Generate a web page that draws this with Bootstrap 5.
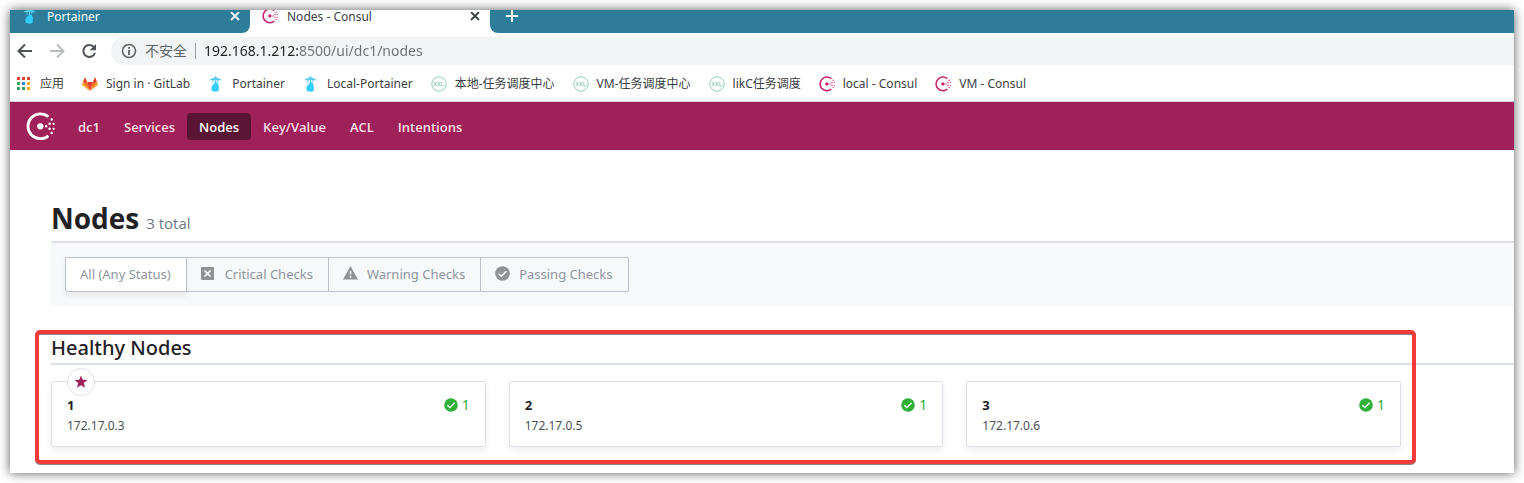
<!DOCTYPE html>
<html lang="zh-CN">
<head>
<meta charset="utf-8">
<meta name="viewport" content="width=device-width, initial-scale=1">
<title>Nodes - Consul</title>
<link href="https://cdn.jsdelivr.net/npm/bootstrap@5.3.0/dist/css/bootstrap.min.css" rel="stylesheet">
<style>
  :root { --teal: #2d7d9a; --magenta: #9e2159; --line: #dce0e6; }
  body { font-family: "Noto Sans", "Noto Sans CJK SC", sans-serif; font-size: 14px; background: #fff; padding: 10px; }
  svg { display: block; flex: none; }
  .window { background: #fff; box-shadow: 0 0 10px rgba(0,0,0,.65); padding-bottom: 26px; }

  .tabstrip { background: #fff; height: 23px; font-size: 12px; line-height: 14px; }
  .tab { width: 240px; padding: 0 10px 0 12px; gap: 9px; color: #3c4043; }
  .tab-inactive { background: var(--teal); color: #fff; border-bottom-right-radius: 8px; }
  .tab-rest { background: var(--teal); border-bottom-left-radius: 8px; padding-left: 16px; }
  .plain-btn { border: 0; background: none; padding: 0; color: inherit; }
  .clip-top { height: 14px; overflow: hidden; display: flex; align-items: flex-end; }

  .toolbar { height: 36px; padding-left: 7px; color: #5f6368; }
  .address { background: #f1f3f4; height: 28px; border-radius: 14px 0 0 14px; margin-left: 14px; padding-left: 10px; gap: 8px; font-size: 14px; }
  .address input { border: 0; outline: 0; background: linear-gradient(90deg, #202124 95px, #6b7075 95px) text; color: #5f6368; -webkit-text-fill-color: transparent; padding: 0; line-height: 24px; }
  .insecure { border-right: 1px solid #9aa0a6; padding-right: 8px; line-height: 16px; }

  .bookmarks { height: 33px; padding: 0 6px 2px; border-bottom: 1px solid #d5d5d8; font-size: 12px; gap: 18px; }
  .bookmarks a { color: #3c4043; gap: 8px; line-height: 16px; }

  .consul-nav { font-family: "Open Sans", sans-serif; background: var(--magenta); height: 48px; padding: 0 16px; font-size: 13px; }
  .consul-nav .logo { margin-right: 11px; }
  .consul-nav .nav-link { color: #f8dfea; font-weight: 600; padding: 5px 12px 3px; line-height: 19px; border-radius: 4px; }
  .consul-nav .nav-link.active { background: #5a1434; color: #fff; }

  main { padding: 50px 0 0 41px; color: #1f2124; }
  h1 { font-family: "Open Sans", sans-serif; font-size: 28px; font-weight: 700; line-height: 37px; border-bottom: 2px solid var(--line); padding-bottom: 4px; }
  h1 span { font-size: 15px; font-weight: 400; line-height: 20px; color: #6f7682; margin-left: 7px; }
  .filters { background: #f7f8fa; padding: 14px; }
  .filters .btn { --bs-btn-color: #8e959f; --bs-btn-border-color: #bac1cc; --bs-btn-active-bg: #fff; --bs-btn-active-color: #8e959f; --bs-btn-active-border-color: #bac1cc;
    --bs-btn-border-radius: 2px; font-size: 13px; line-height: 21px; padding: 6px 15px 6px 14px; height: 35px; display: flex; align-items: center; gap: 9px; }
  .filters .btn-check:checked + .btn { box-shadow: 0 4px 6px rgba(0,0,0,.06); }
  .filters svg { color: #909294; margin-bottom: 3px; }

  .healthy { margin-top: 28px; }
  h2 { font-size: 20px; font-weight: 500; line-height: 27px; border-bottom: 2px solid var(--line); padding-bottom: 2px; }
  .node-grid { display: grid; grid-template-columns: repeat(3, 1fr); gap: 23px; margin: 16px 113px 0 0; }
  .node-card { border: 1px solid var(--line); border-radius: 2px; height: 66px; padding: 13px 15px 0; color: #1f2124; box-shadow: 0 4px 8px rgba(0,0,0,.06); }
  .node-card strong { font-size: 13px; line-height: 20px; }
  .node-card small { font-size: 12px; line-height: 22px; color: #4b4f56; }
  .passing { color: #2eb039; font-size: 14px; line-height: 20px; gap: 4px; }
  .leader { top: -14px; left: 15px; width: 28px; height: 28px; border: 1px solid var(--line); border-radius: 50%; background: #fff; color: var(--magenta); }
  .highlight { inset: -4px 98px -17px -16px; border: 4px solid #f23a3a; border-radius: 5px; filter: drop-shadow(0 1px 0 #85888c); pointer-events: none; }
</style>
</head>
<body>
<svg width="0" height="0" class="position-absolute" aria-hidden="true">
  <symbol id="consul" viewBox="0 0 28 28">
    <path d="M21.6 4.6A12 12 0 1 0 21.6 23" fill="none" stroke="currentColor" stroke-width="2.7"/>
    <g fill="currentColor"><circle cx="13.8" cy="13.8" r="3"/><circle cx="19.4" cy="13.8" r="1.2"/><circle cx="22.8" cy="11.4" r="1.2"/><circle cx="22.8" cy="16.2" r="1.2"/><circle cx="24.8" cy="7.3" r="1.2"/><circle cx="24.8" cy="20.3" r="1.2"/><circle cx="26.7" cy="11.4" r="1.1"/><circle cx="26.7" cy="16.2" r="1.1"/></g>
  </symbol>
  <symbol id="portainer" viewBox="0 0 16 16">
    <path d="M2 3.300L7 1.300V0h1.200v1.200L13 3.300v.9H10.300v1.600h-1V4.200H8.200V7H7V4.200H5.500V7h-.9V4.200H2z" fill="#5ccbf2"/>
    <path d="M4.300 8.500h2V6.500h3.600v2.300h.9v5.200c0 1-1.400 1.700-3.200 1.700S3.500 15 3.500 14v-3.500h.8z" fill="#33cdfb"/>
  </symbol>
  <symbol id="xxl" viewBox="0 0 16 16">
    <circle cx="8" cy="8" r="7.200" fill="#fff" stroke="#8fd0b3"/>
    <path d="M2.800 5.800l3 4.200M5.800 5.800l-3 4.200M6.500 5.800l3 4.200M9.500 5.800l-3 4.200M10.800 5.800V10h2.700" stroke="#8fd0b3" stroke-width=".9" fill="none"/>
  </symbol>
  <symbol id="close" viewBox="0 0 10 10"><path d="M1 1l8 8M9 1L1 9" stroke="currentColor" stroke-width="1.800"/></symbol>
  <symbol id="check" viewBox="0 0 16 16"><circle cx="8" cy="8" r="7.800" fill="currentColor"/><path d="M3.900 8.300l2.800 2.700 5.400-5.500" fill="none" stroke="#fff" stroke-width="1.600"/></symbol>
</svg>

<div class="window">
  <header>
    <div class="tabstrip d-flex">
      <div class="tab tab-inactive d-flex">
        <svg width="16" height="15"><use href="#portainer" width="16" height="16" y="-2"/></svg>
        <span class="flex-grow-1 text-nowrap">Portainer</span>
        <button class="plain-btn clip-top" aria-label="关闭 Portainer"><svg width="10" height="12"><use href="#close" width="10" height="10" y="-1"/></svg></button>
      </div>
      <div class="tab d-flex">
        <svg width="16" height="15" style="color:#ca2171"><use href="#consul" width="16" height="16" y="-2"/></svg>
        <span class="flex-grow-1 text-nowrap">Nodes - Consul</span>
        <button class="plain-btn clip-top" aria-label="关闭 Consul"><svg width="10" height="12"><use href="#close" width="10" height="10" y="-1"/></svg></button>
      </div>
      <div class="tab-rest flex-grow-1 d-flex text-white">
        <button class="plain-btn clip-top" aria-label="新标签页"><svg width="12" height="14" viewBox="0 0 12 14"><path d="M0 6h12M6 0v12" stroke="currentColor" stroke-width="2"/></svg></button>
      </div>
    </div>

    <div class="toolbar d-flex align-items-center">
      <div class="d-flex gap-3">
        <button class="plain-btn" aria-label="后退"><svg width="16" height="16" viewBox="0 0 16 16" fill="none" stroke="#4f5357" stroke-width="2"><path d="M15 8H2M8 1.500L1.500 8 8 14.500"/></svg></button>
        <button class="plain-btn" aria-label="前进"><svg width="16" height="16" viewBox="0 0 16 16" fill="none" stroke="#b9bcbf" stroke-width="2"><path d="M1 8h13M8 1.500L14.500 8 8 14.500"/></svg></button>
        <button class="plain-btn" aria-label="刷新"><svg width="16" height="16" viewBox="0 0 16 16"><path d="M13 4.200A6 6 0 1 0 14 9.800" fill="none" stroke="#4f5357" stroke-width="2"/><path d="M15 1v6.300H8.700z" fill="#4f5357"/></svg></button>
      </div>
      <div class="address d-flex align-items-center flex-grow-1">
        <svg width="16" height="16" viewBox="0 0 16 16"><circle cx="8" cy="8" r="6.500" fill="none" stroke="#5f6368" stroke-width="1.500"/><path d="M7.100 7h1.800v5H7.100zM7.100 4h1.800v1.800H7.100z" fill="#5f6368"/></svg>
        <span class="insecure">不安全</span>
        <input class="flex-grow-1" type="text" aria-label="地址" value="192.168.1.212:8500/ui/dc1/nodes">
      </div>
    </div>

    <nav class="bookmarks d-flex align-items-center text-nowrap" aria-label="书签">
      <a href="#" class="d-flex align-items-center text-decoration-none"><svg width="16" height="16" viewBox="0 0 16 16"><path fill="#ea4335" d="M1 1h3v3H1zM6 1h3v3H6zM11 1h3v3h-3z"/><path fill="#34a161" d="M1 6h3v3H1zM1 11h3v3H1zM6 11h3v3H6z"/><path fill="#2b85f0" d="M6 6h3v3H6z"/><path fill="#f9ab12" d="M11 6h3v3h-3zM11 11h3v3h-3z"/></svg>应用</a>
      <a href="#" class="d-flex align-items-center text-decoration-none"><svg width="16" height="16" viewBox="0 0 16 16"><path fill="#fca326" d="M0 9l1-3.200L8 15zM16 9l-1-3.200L8 15z"/><path fill="#fc6d26" d="M1 6h4.300L8 15zM15 6h-4.300L8 15z"/><path fill="#e24329" d="M5.200 6h5.600L8 15zM1 6l2-5 2.200 5zM15 6l-2-5-2.200 5z"/></svg>Sign in · GitLab</a>
      <a href="#" class="d-flex align-items-center text-decoration-none"><svg width="16" height="16"><use href="#portainer"/></svg>Portainer</a>
      <a href="#" class="d-flex align-items-center text-decoration-none"><svg width="16" height="16"><use href="#portainer"/></svg>Local-Portainer</a>
      <a href="#" class="d-flex align-items-center text-decoration-none"><svg width="16" height="16"><use href="#xxl"/></svg>本地-任务调度中心</a>
      <a href="#" class="d-flex align-items-center text-decoration-none"><svg width="16" height="16"><use href="#xxl"/></svg>VM-任务调度中心</a>
      <a href="#" class="d-flex align-items-center text-decoration-none"><svg width="16" height="16"><use href="#xxl"/></svg>likC任务调度</a>
      <a href="#" class="d-flex align-items-center text-decoration-none"><svg width="16" height="16" color="#ca2171"><use href="#consul"/></svg>local - Consul</a>
      <a href="#" class="d-flex align-items-center text-decoration-none"><svg width="16" height="16" color="#ca2171"><use href="#consul"/></svg>VM - Consul</a>
    </nav>
  </header>

  <nav class="consul-nav d-flex align-items-center" aria-label="Consul">
    <a href="#" class="logo text-white" aria-label="Consul"><svg width="29" height="29"><use href="#consul"/></svg></a>
    <ul class="nav flex-nowrap">
      <li><a class="nav-link" href="#">dc1</a></li>
      <li><a class="nav-link" href="#">Services</a></li>
      <li><a class="nav-link active" href="#" aria-current="page">Nodes</a></li>
      <li><a class="nav-link" href="#">Key/Value</a></li>
      <li><a class="nav-link" href="#">ACL</a></li>
      <li><a class="nav-link" href="#">Intentions</a></li>
    </ul>
  </nav>

  <main>
    <h1 class="m-0">Nodes<span>3 total</span></h1>
    <div class="filters">
      <div class="btn-group" role="group" aria-label="Status">
        <input type="radio" class="btn-check" name="status" id="s-all" checked>
        <label class="btn" for="s-all">All (Any Status)</label>
        <input type="radio" class="btn-check" name="status" id="s-crit">
        <label class="btn" for="s-crit"><svg width="15" height="15" viewBox="0 0 15 15"><rect y="1" width="13" height="13" rx="1" fill="currentColor"/><path d="M3.500 4.500l6 6M9.500 4.500l-6 6" stroke="#fff" stroke-width="1.700"/></svg>Critical Checks</label>
        <input type="radio" class="btn-check" name="status" id="s-warn">
        <label class="btn" for="s-warn"><svg width="15" height="15" viewBox="0 0 15 15"><path d="M7.500 0L15 13.500H0z" fill="currentColor"/><path d="M7.500 5v3.500M7.500 10v1.700" stroke="#fff" stroke-width="1.500"/></svg>Warning Checks</label>
        <input type="radio" class="btn-check" name="status" id="s-pass">
        <label class="btn" for="s-pass"><svg width="15" height="15"><use href="#check"/></svg>Passing Checks</label>
      </div>
    </div>

    <section class="healthy position-relative">
      <h2 class="m-0">Healthy Nodes</h2>
      <div class="node-grid">
        <a href="#" class="node-card position-relative d-flex justify-content-between align-items-start text-decoration-none">
          <span class="leader position-absolute d-flex align-items-center justify-content-center"><svg width="14" height="14" viewBox="0 0 14 14"><path fill="currentColor" d="M7 .5l1.700 4.300 4.800.3-3.700 3 1.200 4.700L7 10.200l-4 2.600 1.200-4.700-3.700-3 4.800-.3z"/></svg></span>
          <span class="d-flex flex-column"><strong>1</strong><small>172.17.0.3</small></span>
          <span class="passing d-flex align-items-center"><svg width="14" height="14"><use href="#check"/></svg>1</span>
        </a>
        <a href="#" class="node-card d-flex justify-content-between align-items-start text-decoration-none">
          <span class="d-flex flex-column"><strong>2</strong><small>172.17.0.5</small></span>
          <span class="passing d-flex align-items-center"><svg width="14" height="14"><use href="#check"/></svg>1</span>
        </a>
        <a href="#" class="node-card d-flex justify-content-between align-items-start text-decoration-none">
          <span class="d-flex flex-column"><strong>3</strong><small>172.17.0.6</small></span>
          <span class="passing d-flex align-items-center"><svg width="14" height="14"><use href="#check"/></svg>1</span>
        </a>
      </div>
      <div class="highlight position-absolute" aria-hidden="true"></div>
    </section>
  </main>
</div>
<script src="https://cdn.jsdelivr.net/npm/bootstrap@5.3.0/dist/js/bootstrap.bundle.min.js"></script>
</body>
</html>
